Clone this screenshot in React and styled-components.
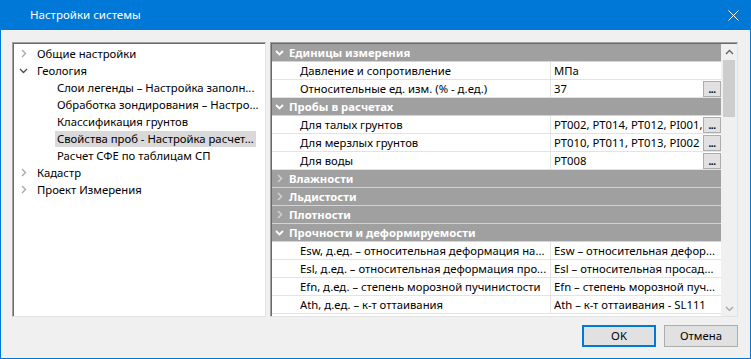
import React from "react";
import styled, { createGlobalStyle } from "styled-components";

const Global = createGlobalStyle`
  html, body { margin: 0; padding: 0; background: #f0f0f0; }
  body { font-family: "Noto Sans", "Liberation Sans", sans-serif; font-size: 11.3px; color: #000; }
  * { box-sizing: border-box; }
`;

const Window = styled.div`
  width: 751px;
  height: 359px;
  display: flex;
  flex-direction: column;
  border: 1px solid #0078d7;
  border-top: none;
  background: #f0f0f0;
  overflow: hidden;
`;

const TitleBar = styled.div`
  height: 30px;
  flex: none;
  background: #0078d7;
  color: #fff;
  display: flex;
  align-items: center;
  padding-left: 29px;
  padding-right: 11px;
  font-size: 11.5px;
`;

const TitleText = styled.div`
  flex: 1;
  padding-bottom: 1px;
`;

const Body = styled.div`
  flex: 1;
  display: flex;
  flex-direction: column;
  padding: 12px 12px 11px 11px;
  gap: 8px;
`;

const Panels = styled.div`
  display: flex;
  gap: 4px;
  height: 275px;
`;

const Sunken = styled.div`
  background: #fff;
  border-top: 1px solid #a0a0a0;
  border-left: 1px solid #a0a0a0;
  border-right: 1px solid #e3e3e3;
  border-bottom: 1px solid #e3e3e3;
  box-shadow: inset 1px 1px 0 #696969;
  overflow: hidden;
`;

const Tree = styled(Sunken)`
  width: 254px;
  padding: 2px 4px 0 2px;
`;

const TreeRow = styled.div`
  height: 17px;
  display: flex;
  align-items: center;
  padding-left: ${(p) => p.$level * 20}px;
  white-space: nowrap;
`;

const Expander = styled.span`
  width: 22px;
  flex: none;
  display: flex;
  align-items: center;
  padding-left: ${(p) => (p.$open ? 4 : 6)}px;
`;

const TreeLabel = styled.span`
  display: inline-block;
  line-height: 15px;
  padding: 0 2px 1px 2px;
  margin-left: -2px;
  background: ${(p) => (p.$selected ? "#d9d9d9" : "transparent")};
  overflow: hidden;
`;

const Grid = styled(Sunken)`
  width: 468px;
  display: flex;
  padding-left: 1px;
  padding-top: 1px;
`;

const Rows = styled.div`
  flex: 1;
  display: flex;
  flex-direction: column;
`;

const CatRow = styled.div`
  height: 18px;
  flex: none;
  background: #a0a0a0;
  border-bottom: 1px solid #d4d4d4;
  display: flex;
  align-items: center;
  color: #fff;
  font-weight: bold;
  white-space: nowrap;
`;

const CatChevron = styled.span`
  width: 17px;
  flex: none;
  display: flex;
  align-items: center;
  padding-left: ${(p) => (p.$open ? 3 : 5)}px;
`;

const PropRow = styled.div`
  height: 18px;
  flex: none;
  display: grid;
  grid-template-columns: 279px 1fr;
  border-bottom: 1px solid #e3e3e3;
  white-space: nowrap;
`;

const NameCell = styled.div`
  padding-left: 28px;
  border-right: 1px solid #e3e3e3;
  overflow: hidden;
  display: flex;
  align-items: center;
`;

const ValueCell = styled.div`
  display: flex;
  align-items: center;
  overflow: hidden;
  padding-left: 3px;
`;

const ValueText = styled.span`
  flex: 1;
  min-width: 0;
  overflow: hidden;
`;

const DotsButton = styled.span`
  flex: none;
  width: 18px;
  height: 16px;
  background: #e1e1e1;
  border: 1px solid #adadad;
  font-size: 10px;
  line-height: 14px;
  letter-spacing: -0.5px;
  display: flex;
  align-items: flex-end;
  justify-content: center;
  align-self: flex-start;
  margin-top: 1px;
  font-weight: bold;
`;

const ScrollBar = styled.div`
  width: 16px;
  flex: none;
  background: #f0f0f0;
  display: flex;
  flex-direction: column;
  align-items: center;
`;

const ScrollArrow = styled.div`
  height: 15px;
  width: 100%;
  display: flex;
  align-items: center;
  justify-content: center;
  flex: none;
`;

const Thumb = styled.div`
  width: 12px;
  height: 57px;
  background: #cdcdcd;
  margin-top: 1px;
`;

const Spacer = styled.div`
  flex: 1;
`;

const Footer = styled.div`
  display: flex;
  justify-content: flex-end;
  gap: 8px;
`;

const Button = styled.button`
  width: 74px;
  height: 22px;
  font-family: inherit;
  font-size: 11.3px;
  color: #000;
  background: #e1e1e1;
  border: 1px solid ${(p) => (p.$default ? "#0078d7" : "#adadad")};
  box-shadow: ${(p) => (p.$default ? "inset 0 0 0 1px #0078d7" : "none")};
  padding: 0 0 1px 0;
`;

const Chev = ({ dir, color, w = 1.3 }) =>
  dir === "down" ? (
    <svg width="9" height="6" viewBox="0 0 9 6">
      <polyline points="1,1 4.5,4.5 8,1" fill="none" stroke={color} strokeWidth={w} />
    </svg>
  ) : dir === "up" ? (
    <svg width="9" height="6" viewBox="0 0 9 6">
      <polyline points="1,5 4.5,1.5 8,5" fill="none" stroke={color} strokeWidth={w} />
    </svg>
  ) : (
    <svg width="6" height="9" viewBox="0 0 6 9">
      <polyline points="1,1 4.5,4.5 1,8" fill="none" stroke={color} strokeWidth={w} />
    </svg>
  );

const treeItems = [
  { level: 0, label: "Общие настройки", exp: "closed" },
  { level: 0, label: "Геология", exp: "open" },
  { level: 1, label: "Слои легенды – Настройка заполн..." },
  { level: 1, label: "Обработка зондирования – Настро..." },
  { level: 1, label: "Классификация грунтов" },
  { level: 1, label: "Свойства проб - Настройка расчет...", selected: true },
  { level: 1, label: "Расчет СФЕ по таблицам СП" },
  { level: 0, label: "Кадастр", exp: "closed" },
  { level: 0, label: "Проект Измерения", exp: "closed" },
];

const gridItems = [
  { cat: "Единицы измерения", open: true },
  { name: "Давление и сопротивление", value: "МПа" },
  { name: "Относительные ед. изм. (% - д.ед.)", value: "37", btn: true },
  { cat: "Пробы в расчетах", open: true },
  { name: "Для талых грунтов", value: "PT002, PT014, PT012, PI001, PI003", btn: true },
  { name: "Для мерзлых грунтов", value: "PT010, PT011, PT013, PI002", btn: true },
  { name: "Для воды", value: "PT008", btn: true },
  { cat: "Влажности" },
  { cat: "Льдистости" },
  { cat: "Плотности" },
  { cat: "Прочности и деформируемости", open: true },
  { name: "Esw, д.ед. – относительная деформация на...", value: "Esw – относительная дефор..." },
  { name: "Esl, д.ед. – относительная деформация про...", value: "Esl – относительная просад..." },
  { name: "Efn, д.ед. – степень морозной пучинистости", value: "Efn – степень морозной пуч..." },
  { name: "Ath, д.ед. – к-т оттаивания", value: "Ath – к-т оттаивания - SL111" },
];

export default function App() {
  return (
    <>
      <Global />
      <Window>
        <TitleBar>
          <TitleText>Настройки системы</TitleText>
          <svg width="11" height="11" viewBox="0 0 11 11">
            <path d="M0.5 0.5 L10.5 10.5 M10.5 0.5 L0.5 10.5" stroke="#fff" strokeWidth="1" />
          </svg>
        </TitleBar>
        <Body>
          <Panels>
            <Tree>
              {treeItems.map((t, i) => (
                <TreeRow key={i} $level={t.level}>
                  <Expander $open={t.exp === "open"}>
                    {t.exp === "open" && <Chev dir="down" color="#4d4d4d" />}
                    {t.exp === "closed" && <Chev dir="right" color="#a6a6a6" />}
                  </Expander>
                  <TreeLabel $selected={t.selected}>{t.label}</TreeLabel>
                </TreeRow>
              ))}
            </Tree>
            <Grid>
              <Rows>
                {gridItems.map((g, i) =>
                  g.cat ? (
                    <CatRow key={i}>
                      <CatChevron $open={g.open}>
                        {g.open ? (
                          <Chev dir="down" color="#ffffff" w={1.8} />
                        ) : (
                          <Chev dir="right" color="#d0d0d0" w={1.6} />
                        )}
                      </CatChevron>
                      {g.cat}
                    </CatRow>
                  ) : (
                    <PropRow key={i}>
                      <NameCell>{g.name}</NameCell>
                      <ValueCell>
                        <ValueText>{g.value}</ValueText>
                        {g.btn && <DotsButton>...</DotsButton>}
                      </ValueCell>
                    </PropRow>
                  )
                )}
              </Rows>
              <ScrollBar>
                <ScrollArrow>
                  <Chev dir="up" color="#606060" w={1.3} />
                </ScrollArrow>
                <Thumb />
                <Spacer />
                <ScrollArrow>
                  <Chev dir="down" color="#a0a0a0" w={1.2} />
                </ScrollArrow>
              </ScrollBar>
            </Grid>
          </Panels>
          <Footer>
            <Button $default>OK</Button>
            <Button>Отмена</Button>
          </Footer>
        </Body>
      </Window>
    </>
  );
}
